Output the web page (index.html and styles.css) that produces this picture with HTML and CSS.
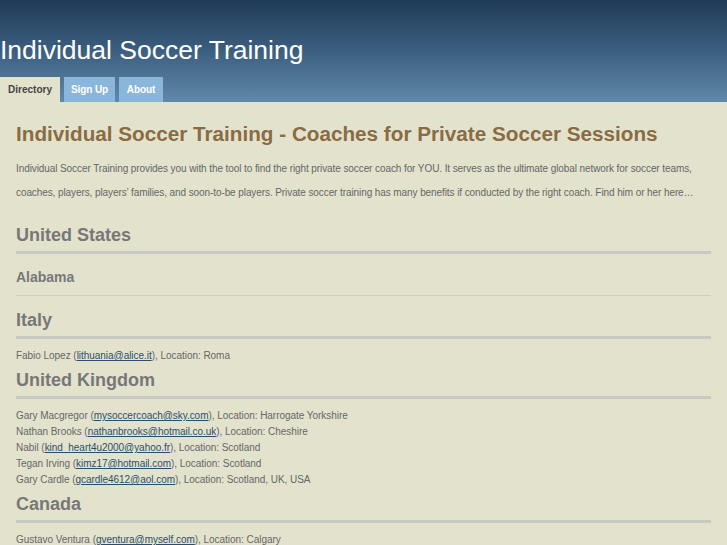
FILE: index.html
```html
<!DOCTYPE html>
<html>
<head>
<meta charset="utf-8">
<link rel="stylesheet" href="styles.css">
</head>
<body>
<header class="header">
  <h1 class="site-title">Individual Soccer Training</h1>
  <nav class="tabs">
    <a class="tab active">Directory</a>
    <a class="tab signup">Sign Up</a>
    <a class="tab about">About</a>
  </nav>
</header>
<main class="content">
  <h1 class="page-title">Individual Soccer Training - Coaches for Private Soccer Sessions</h1>
  <p class="intro">Individual Soccer Training provides you with the tool to find the right private soccer coach for YOU. It serves as the ultimate global network for soccer teams, coaches, players, players’ families, and soon-to-be players. Private soccer training has many benefits if conducted by the right coach. Find him or her here…</p>

  <h2 class="country">United States</h2>
  <h3 class="region">Alabama</h3>

  <h2 class="country">Italy</h2>
  <ul class="coaches">
    <li>Fabio Lopez (<a href="#">lithuania@alice.it</a>), Location: Roma</li>
  </ul>

  <h2 class="country">United Kingdom</h2>
  <ul class="coaches">
    <li>Gary Macgregor (<a href="#">mysoccercoach@sky.com</a>), Location: Harrogate Yorkshire</li>
    <li>Nathan Brooks (<a href="#">nathanbrooks@hotmail.co.uk</a>), Location: Cheshire</li>
    <li>Nabil (<a href="#">kind_heart4u2000@yahoo.fr</a>), Location: Scotland</li>
    <li>Tegan Irving (<a href="#">kimz17@hotmail.com</a>), Location: Scotland</li>
    <li>Gary Cardle (<a href="#">gcardle4612@aol.com</a>), Location: Scotland, UK, USA</li>
  </ul>

  <h2 class="country">Canada</h2>
  <ul class="coaches">
    <li>Gustavo Ventura (<a href="#">gventura@myself.com</a>), Location: Calgary</li>
  </ul>
</main>
</body>
</html>
```
FILE: styles.css
```css
html, body {
  margin: 0;
  padding: 0;
}
body {
  background: #e3e3cd;
  font-family: "Liberation Sans", Arial, sans-serif;
  color: #666;
  overflow: hidden;
}
.header {
  height: 102px;
  background: linear-gradient(to bottom, #203a55 0%, #3c5f80 50%, #6088a8 100%);
  display: flex;
  flex-direction: column;
  justify-content: flex-end;
}
.site-title {
  margin: 0 0 12px 0;
  font-weight: normal;
  font-size: 26.5px;
  line-height: 30px;
  color: #fff;
}
.tabs {
  display: flex;
  gap: 4px;
  height: 25px;
}
.tab {
  display: flex;
  align-items: center;
  justify-content: center;
  font-size: 10px;
  font-weight: bold;
  color: #fff;
  background: #8ab6da;
  height: 25px;
  white-space: nowrap;
  letter-spacing: -0.1px;
}
.tab.active {
  background: #e3e3cd;
  color: #444;
  width: 60px;
  letter-spacing: 0;
}
.tab.signup {
  width: 51px;
}
.tab.about {
  width: 44px;
}
.content {
  padding: 0 16px;
}
.page-title {
  margin: 19px 0 0 0;
  font-size: 20.7px;
  line-height: 26px;
  color: #8a6b43;
  font-weight: bold;
}
.intro {
  margin: 10px 0 0 0;
  font-size: 10px;
  line-height: 24px;
  letter-spacing: -0.09px;
  color: #666;
}
.country {
  margin: 0;
  font-size: 18px;
  line-height: 24px;
  color: #777;
  padding-bottom: 4px;
  border-bottom: 3px solid #c9c9c4;
}
.intro + .country {
  margin-top: 18px;
}
.region {
  margin: 0;
  font-size: 14px;
  line-height: 18px;
  color: #777;
  padding: 14px 0 9px;
  border-bottom: 1px solid #cfcfc4;
  margin-bottom: 12px;
}
.coaches {
  list-style: none;
  margin: 0;
  padding: 9px 0 4px 0;
  font-size: 10px;
  line-height: 16px;
  letter-spacing: -0.04px;
  color: #666;
}
.coaches a {
  color: #2d4d6c;
  text-decoration: underline;
}
```
